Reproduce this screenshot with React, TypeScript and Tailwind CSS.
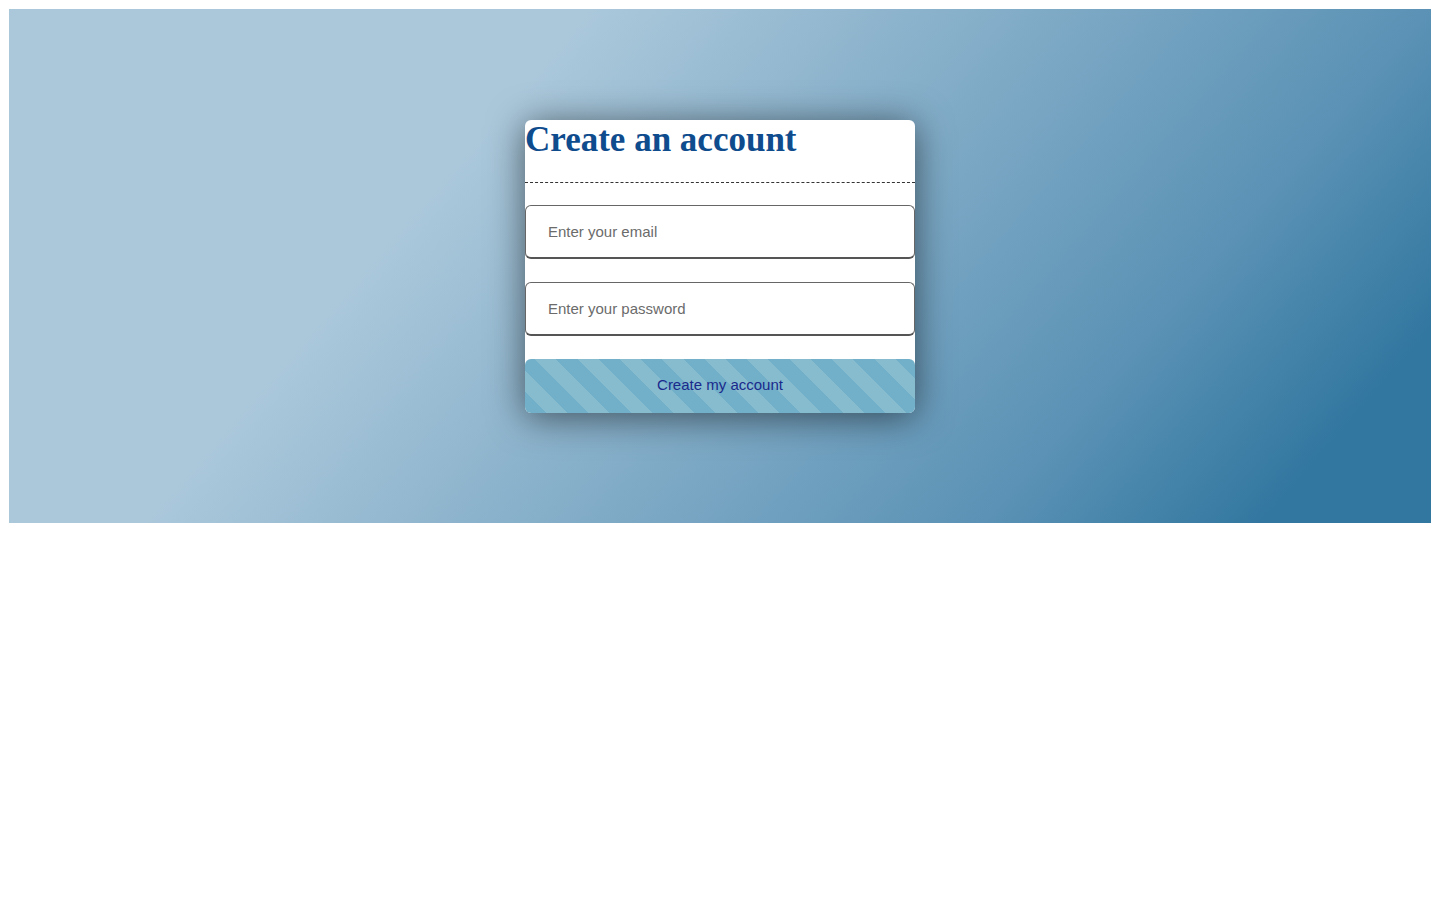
import React from "react";

export default function App() {
  return (
    <div className="w-full p-[9px] bg-white">
      <div className="h-[514px] w-full flex items-center justify-center bg-[linear-gradient(131deg,#abc8db_31%,#5b92b5_76%,#3277a0_91%)]">
        <div className="w-[390px] bg-white rounded-[6px] shadow-[0_4px_36px_rgba(0,0,0,0.55)] flex flex-col">
          <h1 className="m-0 text-[35px] leading-[40px] font-bold text-[#0f4c8e] font-['Liberation_Serif',serif] pb-[22px] border-b border-dashed border-[#333]">
            Create an account
          </h1>
          <input
            type="email"
            placeholder="Enter your email"
            className="mt-[22px] h-[54px] w-full rounded-[6px] border border-[#666] border-b-2 border-b-[#555] bg-white px-[22px] text-[15px] font-['Liberation_Sans',sans-serif] text-[#333] placeholder:text-[#6b6b6b] outline-none"
          />
          <input
            type="password"
            placeholder="Enter your password"
            className="mt-[23px] h-[54px] w-full rounded-[6px] border border-[#666] border-b-2 border-b-[#555] bg-white px-[22px] text-[15px] font-['Liberation_Sans',sans-serif] text-[#333] placeholder:text-[#6b6b6b] outline-none"
          />
          <button
            type="button"
            className="mt-[23px] h-[54px] w-full rounded-[6px] bg-[#72afc8] bg-[repeating-linear-gradient(45deg,#72afc8_0px,#72afc8_15px,#87bccf_15px,#87bccf_30px)] text-[15px] font-['Liberation_Sans',sans-serif] text-[#1a2a8c]"
          >
            Create my account
          </button>
        </div>
      </div>
    </div>
  );
}
